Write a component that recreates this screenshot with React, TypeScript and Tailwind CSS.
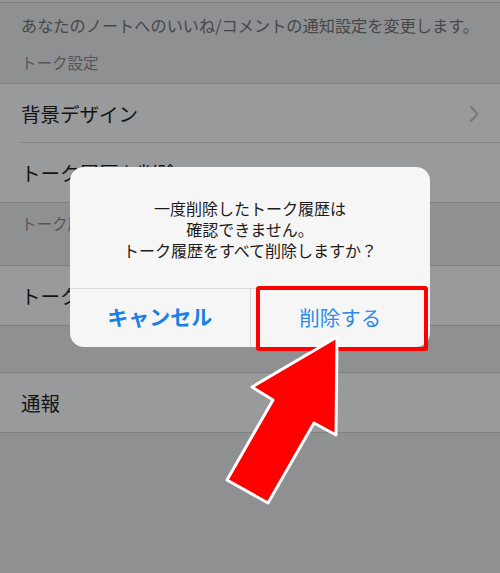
import React from "react";

const font = { fontFamily: '"Noto Sans CJK JP", "Noto Sans", sans-serif' };

function Row({ label, chevron, inset }: { label: string; chevron?: boolean; inset?: boolean }) {
  return (
    <div className="relative h-[59px] bg-[#999a9b] flex items-center pl-[21px] pr-[21px]">
      <span className="text-[19.5px] text-[#141414] leading-none flex-1">{label}</span>
      {chevron && (
        <svg width="10" height="18" viewBox="0 0 10 18" className="text-[#77787a]">
          <path d="M2 2 L8.5 9 L2 16" fill="none" stroke="currentColor" strokeWidth="2" strokeLinecap="round" strokeLinejoin="round" />
        </svg>
      )}
      {inset && <div className="absolute bottom-0 left-[20px] right-0 h-px bg-[#848587]" />}
    </div>
  );
}

export default function App() {
  return (
    <div className="relative w-[500px] h-[573px] overflow-hidden bg-[#8f9092]" style={font}>
      <div className="h-[3px] bg-[#939496] border-b border-[#7f8082]" />
      <div className="h-[81px] flex flex-col pl-[21px] border-b border-[#7f8082]">
        <div className="h-[40px] flex items-center text-[16.2px] text-[#474749] leading-none pt-[5px]">
          あなたのノートへのいいね/コメントの通知設定を変更します。
        </div>
        <div className="h-[40px] flex items-center text-[15.5px] text-[#55565a] leading-none">
          トーク設定
        </div>
      </div>
      <Row label="背景デザイン" chevron inset />
      <div className="border-b border-[#7f8082]">
        <Row label="トーク履歴を削除" />
      </div>
      <div className="h-[63px] pl-[21px] pt-[9px] text-[15.5px] text-[#55565a] border-b border-[#7f8082]">
        トーク履歴のバックアップ
      </div>
      <div className="border-b border-[#7f8082]">
        <Row label="トークのバックアップ" />
      </div>
      <div className="h-[47px] border-b border-[#7f8082]" />
      <div className="border-b border-[#7f8082]">
        <Row label="通報" />
      </div>

      {/* Alert dialog */}
      <div className="absolute left-[70px] top-[167px] w-[360px] h-[180px] rounded-[14px] bg-[#f6f6f6] flex flex-col overflow-hidden">
        <div className="h-[121px] flex flex-col items-center justify-center pt-[3px] text-[16px] leading-[21px] text-[#1c1c1c]">
          <div>一度削除したトーク履歴は</div>
          <div>確認できません。</div>
          <div>トーク履歴をすべて削除しますか？</div>
        </div>
        <div className="flex-1 flex border-t border-[#d9d9db]">
          <div className="flex-1 flex items-center justify-center text-[21px] font-bold text-[#1a7fe6] border-r border-[#d9d9db] pb-[2px]">
            キャンセル
          </div>
          <div className="flex-1 flex items-center justify-center text-[20.5px] text-[#2a8be8] pb-[2px]">
            削除する
          </div>
        </div>
      </div>

      {/* Red highlight box */}
      <div className="absolute left-[256px] top-[286px] w-[172px] h-[65px] border-[4px] border-[#ff0000] rounded-[3px]" />

      {/* Arrow */}
      <svg className="absolute left-0 top-0 pointer-events-none" width="500" height="573" viewBox="0 0 500 573">
        <polygon
          points="337,337 336,435 314,423 268,503 227,480 273,400 252,387"
          fill="#ff0000"
          stroke="#ffffff"
          strokeWidth="3"
          strokeLinejoin="round"
        />
      </svg>
    </div>
  );
}
